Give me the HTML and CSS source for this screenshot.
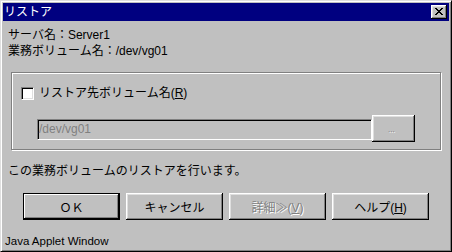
FILE: index.html
```html
<!DOCTYPE html>
<html lang="ja">
<head>
    <meta charset="UTF-8">
    <title>リストア</title>
    <link rel="stylesheet" href="styles.css">
</head>
<body>
    <div class="window">
        <div class="titlebar">
            <span class="title">リストア</span>
            <button class="close-btn" aria-label="閉じる">
                <svg width="8" height="7" viewBox="0 0 8 7" shape-rendering="crispEdges">
                    <path fill="#000" d="M0 0h2v1H0z M6 0h2v1H6z M1 1h2v1H1z M5 1h2v1H5z M2 2h4v1H2z M3 3h2v1H3z M2 4h4v1H2z M1 5h2v1H1z M5 5h2v1H5z M0 6h2v1H0z M6 6h2v1H6z"/>
                </svg>
            </button>
        </div>

        <div class="info">
            <div class="info-line">サーバ名：Server1</div>
            <div class="info-line">業務ボリューム名：/dev/vg01</div>
        </div>

        <div class="group">
            <label class="check-row">
                <span class="checkbox"></span>
                <span class="check-label">リストア先ボリューム名(<u>R</u>)</span>
            </label>
            <div class="field-row">
                <div class="text-field">/dev/vg01</div>
                <button class="button browse-btn" disabled><span class="dots">...</span></button>
            </div>
        </div>

        <p class="message">この業務ボリュームのリストアを行います。</p>

        <div class="actions">
            <button class="button default-btn">ＯＫ</button>
            <button class="button">キャンセル</button>
            <button class="button" disabled>詳細<span class="cjk">≫</span>(<u>V</u>)</button>
            <button class="button">ヘルプ(<u>H</u>)</button>
        </div>

        <div class="status">Java Applet Window</div>
    </div>
</body>
</html>
```

FILE: styles.css
```css
body {
    margin: 0;
    font-family: "Liberation Sans", "Noto Sans CJK JP", sans-serif;
    font-size: 12px;
    color: #000;
    background: #c0c0c0;
}

.cjk {
    font-family: "Noto Sans CJK JP", sans-serif;
}

.window {
    width: 452px;
    height: 252px;
    box-sizing: border-box;
    padding: 2px;
    background: #c0c0c0;
    border: 1px solid;
    border-color: #dfdfdf #000 #000 #dfdfdf;
    box-shadow: inset 1px 1px #fff, inset -1px -1px #808080;
    display: flex;
    flex-direction: column;
}

.titlebar {
    height: 18px;
    background: #000080;
    color: #fff;
    display: flex;
    align-items: center;
    justify-content: space-between;
    padding: 0 2px 0 1px;
}

.title {
    line-height: 18px;
}

.close-btn {
    width: 16px;
    height: 14px;
    padding: 0;
    margin: 0;
    border: none;
    background: #c0c0c0;
    box-shadow: inset -1px -1px #000, inset 1px 1px #fff, inset -2px -2px #808080, inset 2px 2px #dfdfdf;
    display: flex;
    align-items: center;
    justify-content: center;
}

.close-btn svg {
    display: block;
    margin: 0 1px 1px 0;
}

.info {
    padding: 6px 0 0 5px;
}

.info-line {
    line-height: 16px;
}

.group {
    margin: 13px 0 0 8px;
    width: 430px;
    height: 80px;
    box-sizing: border-box;
    border: 1px solid #808080;
    box-shadow: inset 1px 1px #fff, 1px 1px #fff;
    padding: 13px 0 0 9px;
}

.check-row {
    height: 15px;
    display: flex;
    align-items: center;
    gap: 5px;
}

.checkbox {
    width: 13px;
    height: 13px;
    box-sizing: border-box;
    background: #fff;
    border: 1px solid;
    border-color: #808080 #fff #fff #808080;
    box-shadow: inset 1px 1px #000, inset -1px -1px #dfdfdf;
}

.check-label {
    line-height: 15px;
}

.field-row {
    display: flex;
    margin: 14px 0 0 16px;
}

.text-field {
    width: 335px;
    height: 21px;
    margin-top: 4px;
    box-sizing: border-box;
    border: 1px solid;
    border-color: #808080 #fff #fff #808080;
    box-shadow: inset 1px 1px #000, inset -1px -1px #c0c0c0;
    color: #808080;
    line-height: 19px;
    padding-left: 1px;
}

.button {
    font: inherit;
    color: #000;
    background: #c0c0c0;
    margin: 0;
    padding: 0;
    border: none;
    box-shadow: inset -1px -1px #000, inset 1px 1px #fff, inset -2px -2px #808080, inset 2px 2px #dfdfdf;
}

.button:disabled {
    color: #808080;
    text-shadow: 1px 1px #fff;
}

.browse-btn {
    width: 43px;
    height: 27px;
    position: relative;
}

.dots {
    font-size: 8px;
    line-height: 8px;
    position: absolute;
    left: 16px;
    top: 11px;
}

.message {
    margin: 13px 0 0 5px;
    line-height: 16px;
}

.actions {
    display: flex;
    gap: 6px;
    margin: 14px 0 0 20px;
}

.actions .button {
    width: 97px;
    height: 27px;
}

.default-btn {
    box-shadow: inset 0 0 0 1px #000, inset -2px -2px #000, inset 2px 2px #fff, inset -3px -3px #808080;
}

.status {
    margin: 13px 0 0 2px;
    font-size: 11.5px;
    line-height: 16px;
}
```
